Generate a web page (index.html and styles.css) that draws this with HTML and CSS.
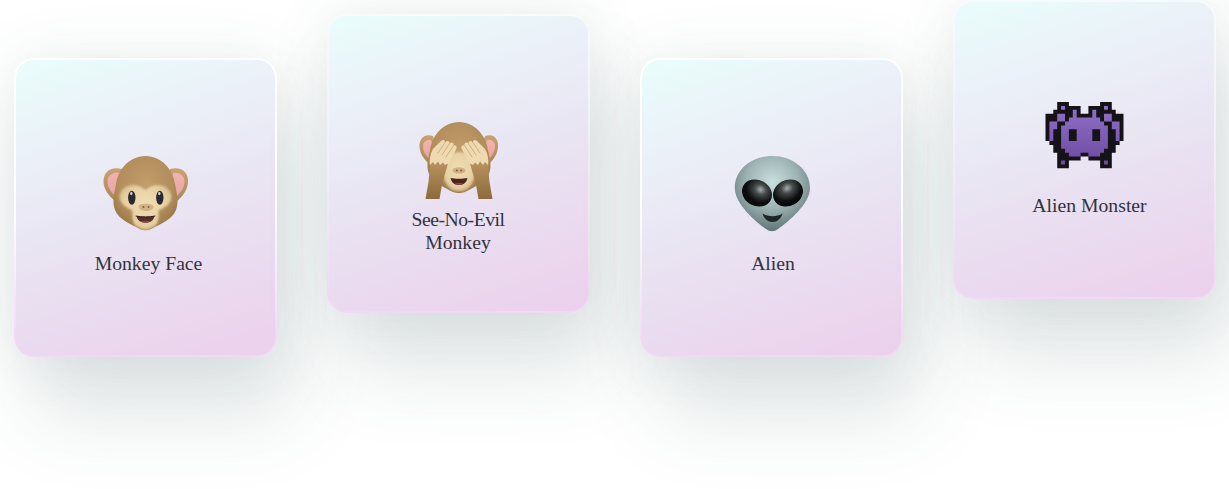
FILE: index.html
```html
<!DOCTYPE html>
<html lang="en">
<head>
<meta charset="utf-8">
<title>Emoji cards</title>
<link rel="stylesheet" href="styles.css">
</head>
<body>
<main class="row">
  <article class="card card-low">
    <svg class="icon" viewBox="0 0 100 110" aria-hidden="true">
      <defs>
        <radialGradient id="fur" cx="50%" cy="38%" r="62%"><stop offset="0" stop-color="#c29c6b"/><stop offset=".7" stop-color="#b28d5c"/><stop offset="1" stop-color="#9a7847"/></radialGradient>
        <radialGradient id="skin" cx="50%" cy="45%" r="60%"><stop offset="0" stop-color="#f0deb4"/><stop offset=".7" stop-color="#e6d1a2"/><stop offset="1" stop-color="#d3b98a"/></radialGradient>
        <linearGradient id="ear" x1="0" y1="0" x2="0" y2="1"><stop offset="0" stop-color="#f2b3ad"/><stop offset="1" stop-color="#e8a3a3"/></linearGradient>
        <linearGradient id="earRim" x1="0" y1="0" x2="0" y2="1"><stop offset="0" stop-color="#c7a372"/><stop offset="1" stop-color="#a98757"/></linearGradient>
        <linearGradient id="arm" x1="0" y1="0" x2="0" y2="1"><stop offset="0" stop-color="#b8935f"/><stop offset="1" stop-color="#8d6a3b"/></linearGradient>
        <filter id="soft" x="-10%" y="-10%" width="120%" height="120%"><feGaussianBlur stdDeviation=".9"/></filter>
      </defs>
      <path fill="url(#earRim)" d="M26 31C14 28 7 35 7.500 44C8 52 13 58 20 64L28 45Z"/>
      <path fill="url(#earRim)" d="M74 31C86 28 92.500 35 92 44C91.500 52 87 58 80 64L72 45Z"/>
      <path fill="url(#ear)" d="M23 35C15 34 11 39 11.500 45C12 50 15 54 19 58L25 44Z"/>
      <path fill="url(#ear)" d="M77 35C85 34 89 39 88.500 45C88 50 85 54 81 58L75 44Z"/>
      <path fill="url(#fur)" d="M49.500 18C66 18 77 32 79 46C81 56 83 64 80 72C76 82 64 86 57 90C52 93 47 93 42 90C35 86 23 82 19 72C16 64 18 56 20 46C22 32 33 18 49.500 18Z"/>
      <path fill="url(#skin)" filter="url(#soft)" d="M49.500 52C44 47 37 46 31.500 48C26 50 22.500 56 24 61.500C26 67 31 70 36.500 72.500C36 79 36.500 85 39.500 87.500C43 90 46 91.500 49.500 92C53 91.500 56 90 59.500 87.500C62.500 85 63 79 62.500 72.500C68 70 73 67 75 61.500C76.500 56 73 50 67.500 48C62 46 55 47 49.500 52Z"/>
      <ellipse cx="35.800" cy="59.700" rx="3.700" ry="7" fill="#2a2a2e"/>
      <ellipse cx="63.800" cy="59.700" rx="3.700" ry="7" fill="#2a2a2e"/>
      <ellipse cx="35.300" cy="55.500" rx="1.200" ry="1.800" fill="#cfcfd4"/>
      <ellipse cx="63.300" cy="55.500" rx="1.200" ry="1.800" fill="#cfcfd4"/>
      <path fill="#d2b386" d="M42.500 69C42.500 66.500 46 65.800 50 65.800C54 65.800 57.500 66.500 57.500 69C57.500 71.500 54 73 50 73C46 73 42.500 71.500 42.500 69Z"/>
      <circle cx="47.500" cy="69" r="1" fill="#80603a"/>
      <circle cx="52.500" cy="69" r="1" fill="#80603a"/>
      <path fill="#5b2a2a" d="M40.500 78.300C46 79.200 53 79.200 58.500 78.300C57.500 82.500 54.500 84.800 49.500 84.800C44.500 84.800 41.500 82.500 40.500 78.300Z"/>
      <path fill="#8c4a44" d="M45 83.500C46.500 82.500 52.500 82.500 54 83.500C52.500 85 46.500 85 45 83.500Z"/>
      <path fill="none" stroke="#2c1a18" stroke-width="1" stroke-linecap="round" d="M40 78.100C46 79.200 53 79.200 59 78.100"/>
    </svg>
    <p class="label label-monkey">Monkey Face</p>
  </article>

  <article class="card card-mid card-soft">
    <svg class="icon" viewBox="0 0 100 110" aria-hidden="true">
      <path fill="url(#earRim)" d="M24 42C14 39 10 46 10.500 53C11 60 15 65 20 70L28 55Z"/>
      <path fill="url(#earRim)" d="M76 42C86 39 89.500 46 89 53C88.500 60 85 65 80 70L72 55Z"/>
      <path fill="url(#ear)" d="M22 46C16 45 13.500 49 14 54C14.500 58 17 62 20 65L25 54Z"/>
      <path fill="url(#ear)" d="M78 46C84 45 86.500 49 86 54C85.500 58 83 62 80 65L75 54Z"/>
      <path fill="url(#fur)" d="M50 28C66 28 77 42 79 56C81 66 83 72 80 80C77 88 62 95 56 98C52 99.500 48 99.500 44 98C38 95 23 88 20 80C17 72 19 66 21 56C23 42 34 28 50 28Z"/>
      <path fill="url(#skin)" filter="url(#soft)" d="M50 58C43 58 35 62 34 72C33 82 36 91 42 95C46 98 54 98 58 95C64 91 67 82 66 72C65 62 57 58 50 58Z"/>
      <path fill="#d2b386" d="M43.500 76.500C43.500 74.300 47 73.300 50 73.300C53 73.300 56.500 74.300 56.500 76.500C56.500 78.700 53 79.800 50 79.800C47 79.800 43.500 78.700 43.500 76.500Z"/>
      <circle cx="47.800" cy="76.500" r="1" fill="#80603a"/>
      <circle cx="52.200" cy="76.500" r="1" fill="#80603a"/>
      <path fill="#4e2423" d="M41.500 84C46 85 54 85 58.500 84C57.500 88.500 54.500 91 50 91C45.500 91 42.500 88.500 41.500 84Z"/>
      <path fill="#8c4a44" d="M45.500 89.800C47 88.800 53 88.800 54.500 89.800C53 91.200 47 91.200 45.500 89.800Z"/>
      <path fill="#eed9b0" d="M21 72C20 66 21 60 24 55L32 47C34 45 36.500 46 36 48.500C37.500 46 41 46.500 40.500 49.500C42 47.500 45.500 48.500 44.500 51.500C46 50.500 48.500 52 47.500 54.500L41 67L37 75L24 76Z"/>
      <path fill="#eed9b0" d="M79 72C80 66 79 60 76 55L68 47C66 45 63.500 46 64 48.500C62.500 46 59 46.500 59.500 49.500C58 47.500 54.500 48.500 55.500 51.500C54 50.500 51.500 52 52.500 54.500L59 67L63 75L76 76Z"/>
      <path fill="none" stroke="#caa97b" stroke-width=".9" stroke-linecap="round" d="M36 48.500L29 59M40.500 49.500L33 61M44.500 51.500L37 63M64 48.500L71 59M59.500 49.500L67 61M55.500 51.500L63 63"/>
      <path fill="url(#arm)" d="M21 71L24 68L26 71L29 67.500L31 71L34 68.500L36 71L39 69.500L36 80L33.500 88L30.500 105L16.500 105L19.500 88Z"/>
      <path fill="url(#arm)" d="M79 71L76 68L74 71L71 67.500L69 71L66 68.500L64 71L61 69.500L64 80L66.500 88L69.500 105L83.500 105L80.500 88Z"/>
    </svg>
    <p class="label label-evil"><span class="line-tight">See-No-Evil</span><br>Monkey</p>
  </article>

  <article class="card card-low">
    <svg class="icon" viewBox="0 0 100 110" aria-hidden="true">
      <defs>
        <radialGradient id="alien" cx="50%" cy="35%" r="62%"><stop offset="0" stop-color="#c9e0e0"/><stop offset=".55" stop-color="#9fb4b4"/><stop offset="1" stop-color="#667a7b"/></radialGradient>
        <radialGradient id="eyeL" cx="55%" cy="32%" r="62%"><stop offset="0" stop-color="#a8adad"/><stop offset=".3" stop-color="#474c4c"/><stop offset=".75" stop-color="#0e0f10"/><stop offset="1" stop-color="#070808"/></radialGradient>
      </defs>
      <path fill="url(#alien)" d="M50.200 18C70 18 88 31 88 50C88 66 66 84 56 91C52 94 48 94 44 91C34 84 12.800 66 12.800 50C12.800 31 30 18 50.200 18Z"/>
      <ellipse cx="35" cy="55" rx="15.500" ry="13" transform="rotate(28 35 55)" fill="url(#eyeL)"/>
      <ellipse cx="66" cy="55" rx="15.500" ry="13" transform="rotate(-28 66 55)" fill="url(#eyeL)"/>
      <path fill="#1f2526" d="M40.500 75.500C46 79 55 79 60.500 75.500C59 81 55 84 50.500 84C46 84 42 81 40.500 75.500Z"/>
    </svg>
    <p class="label label-alien">Alien</p>
  </article>

  <article class="card card-top card-soft">
    <svg class="icon" viewBox="0 0 100 110" aria-hidden="true">
      <defs>
        <linearGradient id="inv" x1="0" y1="0" x2="0" y2="1"><stop offset="0" stop-color="#9070c8"/><stop offset="1" stop-color="#6d4aa0"/></linearGradient>
      </defs>
      <g transform="translate(10.500 22) scale(3.900)">
        <path fill="#151317" d="M3 0h3v1h-3zM14 0h3v1h-3zM3 1h6v1h-6zM11 1h6v1h-6zM2 2h7v1h-7zM11 2h7v1h-7zM0 3h20v7h-20zM1 10h18v1h-18zM2 11h16v2h-16zM3 13h14v1h-14zM3 14h6v1h-6zM11 14h6v1h-6zM3 15h3v2h-3zM14 15h3v2h-3z"/>
        <path fill="url(#inv)" d="M4 1h1v1h-1zM15 1h1v1h-1zM7 2h1v2h-1zM12 2h1v2h-1zM3 3h2v2h-2zM15 3h2v2h-2zM6 4h8v1h-8zM5 5h10v1h-10zM1 5h2v2h-2zM17 5h2v2h-2zM4 6h12v1h-12zM1 7h1v3h-1zM18 7h1v3h-1zM4 7h2v3h-2zM8 7h4v3h-4zM14 7h2v3h-2zM4 10h12v2h-12zM5 12h10v1h-10zM6 13h3v1h-3zM11 13h3v1h-3zM4 15h1v1h-1zM15 15h1v1h-1z"/>
      </g>
    </svg>
    <p class="label label-monster">Alien Monster</p>
  </article>
</main>
</body>
</html>
```
FILE: styles.css
```css
* {
  box-sizing: border-box;
}

html,
body {
  margin: 0;
  height: 100%;
  background: #fff;
  overflow: hidden;
}

.row {
  display: flex;
  align-items: flex-start;
  gap: 50px;
  padding-left: 14px;
}

.card {
  flex: 0 0 263px;
  height: 299px;
  padding-top: 78px;
  display: flex;
  flex-direction: column;
  align-items: center;
  border: 2px solid transparent;
  border-radius: 20px;
  background:
    linear-gradient(162deg, #e9fdfb 0%, #ebf0f8 27%, #e9e3f2 55%, #ecd0ec 100%) padding-box,
    linear-gradient(180deg, #fff 0%, #fff 50%, #f0daf2 95%) border-box;
  box-shadow:
    18px 58px 80px rgba(55, 85, 85, 0.15),
    0 0 60px rgba(55, 85, 85, 0.1);
}

.card-low {
  margin-top: 58px;
}

.card-mid {
  margin-top: 14px;
}

.card-top {
  margin-top: 0;
}

.card-soft {
  background:
    linear-gradient(162deg, #e9fdfb 0%, #ebf0f8 27%, #e9e3f2 55%, #ecd0ec 100%) padding-box,
    linear-gradient(180deg, #f6fbfd 0%, #f2eef8 50%, #f0daf2 95%) border-box;
}

.icon {
  flex: none;
  display: block;
  width: 100px;
  height: 110px;
  filter: blur(0.4px);
}

.label {
  margin: 4px 0 0;
  font-family: "Liberation Serif", serif;
  font-size: 19.7px;
  line-height: 23px;
  text-align: center;
  color: #33333b;
}

.label-monkey {
  margin-left: 6px;
}

.label-evil {
  margin-right: 1px;
}

.line-tight {
  letter-spacing: -0.5px;
}

.label-alien {
  margin-left: 3px;
}

.label-monster {
  margin-left: 10px;
}
```
